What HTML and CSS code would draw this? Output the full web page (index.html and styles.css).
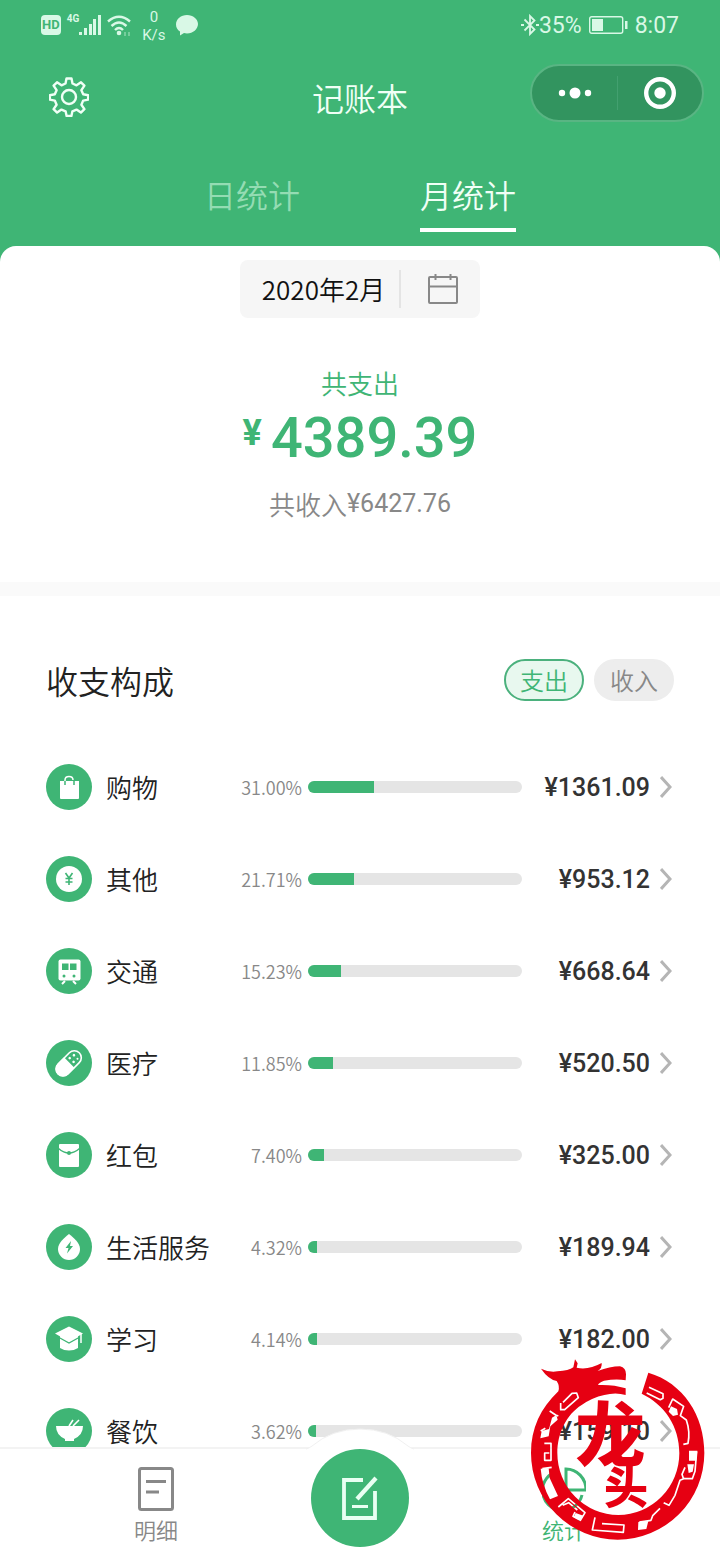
FILE: index.html
```html
<!DOCTYPE html>
<html lang="zh-CN">
<head>
<meta charset="utf-8">
<meta name="viewport" content="width=device-width, initial-scale=1">
<title>记账本</title>
<link rel="stylesheet" href="styles.css">
</head>
<body>
<div class="app">
  <header class="header">
    <div class="status">
      <div class="status-left">
        <span class="hd">HD</span>
        <span class="net">4G</span>
        <svg class="signal" width="22" height="20" viewBox="0 0 22 20" fill="currentColor"><path d="M0 17h3v3H0zM5 13h3v7H5zM10 9h3v11h-3zM14 4h3v16h-3zM19 0h3v20h-3z"/></svg>
        <svg width="25" height="21" viewBox="0 0 25 21" fill="none" stroke="currentColor" stroke-width="2.4"><path d="M1 6.500Q12 -3 23 6.500M4.500 11Q12 4 19.500 11M8 15Q12 11 16 15"/><circle cx="12" cy="18" r="2.300" fill="currentColor" stroke="none"/><path d="M18 17v4M22 17v4" stroke-width="2" opacity=".35"/></svg>
        <span class="speed"><span>0</span><span>K/s</span></span>
        <svg class="chat" width="22" height="21" viewBox="0 0 22 21" fill="currentColor"><path d="M11 0c6 0 11 4 11 9s-5 9.500-11 9.500c-1.200 0-2 0-3-.4L4 20.500V16.500C1.500 15 0 12.500 0 9.500 0 4 5 0 11 0z"/></svg>
      </div>
      <div class="status-right">
        <svg width="18" height="22" viewBox="0 0 18 22" fill="none" stroke="currentColor" stroke-width="1.800"><path d="M3.500 5.500l10 10L9 20V2l4.500 4.500-10 10"/><path d="M0 11h3M15 11h3"/></svg>
        <span>35%</span>
        <svg class="battery" width="39" height="18" viewBox="0 0 39 18"><rect x=".7" y=".7" width="33" height="16.600" rx="2" fill="none" stroke="currentColor" stroke-width="1.400"/><path d="M3 3h11v12H3zM36 5h2.500v8H36z" fill="currentColor"/></svg>
        <time>8:07</time>
      </div>
    </div>
    <div class="nav">
      <button class="icon-button" aria-label="设置">
        <svg width="40" height="40" viewBox="0 0 40 40" fill="none" stroke="currentColor" stroke-width="2.400" stroke-linejoin="round"><path d="M17.500 1.500h5l1 5 4 1.800 4.500-3 3.400 3.400-3 4.500 1.800 4.100 5 .9v4.400l-5 1-1.800 4.100 3 4.400-3.500 3.500-4.400-3-4.100 1.700-1 4.700h-4.800l-1-4.700-4.100-1.700-4.400 3-3.500-3.500 3-4.400-1.800-4.100-5-1v-4.400l5-.9 1.800-4.100-3-4.500 3.400-3.400 4.500 3 4-1.800z"/><circle cx="20" cy="20" r="7"/></svg>
      </button>
      <h1 class="title">记账本</h1>
      <div class="capsule">
        <button aria-label="更多"><svg width="36" height="14" viewBox="0 0 36 14" fill="currentColor"><circle cx="5" cy="7" r="3.200"/><circle cx="18" cy="7" r="5.500"/><circle cx="31" cy="7" r="3.200"/></svg></button>
        <button aria-label="关闭"><svg width="32" height="32" viewBox="0 0 32 32"><circle cx="16" cy="16" r="13.800" fill="none" stroke="currentColor" stroke-width="4.400"/><circle cx="16" cy="16" r="5.700" fill="currentColor"/></svg></button>
      </div>
    </div>
    <nav class="tabs">
      <button class="tab">日统计</button>
      <button class="tab tab-active">月统计</button>
    </nav>
  </header>

  <main class="content">
    <section class="summary">
      <button class="period">
        <span class="period-text">2020年2月</span>
        <svg width="32" height="32" viewBox="0 0 32 32" fill="none" stroke="currentColor" stroke-width="2"><rect x="2" y="4" width="28" height="26" rx="1"/><path d="M2 13.500h28M8.500 1v6M23.500 1v6"/></svg>
      </button>
      <p class="spend-label">共支出</p>
      <p class="spend"><span class="currency">¥</span>4389.39</p>
      <p class="income">共收入<span class="income-value">¥6427.76</span></p>
    </section>

    <section class="breakdown">
      <div class="breakdown-head">
        <h2>收支构成</h2>
        <div class="pills">
          <button class="pill pill-active">支出</button>
          <button class="pill">收入</button>
        </div>
      </div>
      <ul class="rows">
        <li class="row">
          <svg class="badge" viewBox="0 0 46 46"><circle class="disc" cx="23" cy="23" r="23"/><path d="M14 17h19v17q0 1-1 1H15q-1 0-1-1z" fill="#fff"/><path d="M19 22v-6q0-3.500 4-3.500t4 3.500" fill="none" stroke="#fff" stroke-width="1.500"/><path d="M19 17v4M28 17v4" stroke="#3fb575" stroke-width="1.500"/></svg>
          <span class="name">购物</span><span class="percent">31.00%</span>
          <span class="bar"><span class="fill" style="width:31%"></span></span>
          <span class="amount">¥1361.09</span><svg class="chevron" viewBox="0 0 12 22"><path d="M1 1l9 10-9 10"/></svg>
        </li>
        <li class="row">
          <svg class="badge" viewBox="0 0 46 46"><circle class="disc" cx="23" cy="23" r="23"/><circle cx="23" cy="23" r="13" fill="#fff"/><path d="M19.500 17l3.500 5 3.500-5M23 22v7M19.500 22.500h7M19.500 26h7" fill="none" stroke="#3fb575" stroke-width="1.600"/></svg>
          <span class="name">其他</span><span class="percent">21.71%</span>
          <span class="bar"><span class="fill" style="width:21.71%"></span></span>
          <span class="amount">¥953.12</span><svg class="chevron" viewBox="0 0 12 22"><path d="M1 1l9 10-9 10"/></svg>
        </li>
        <li class="row">
          <svg class="badge" viewBox="0 0 46 46"><circle class="disc" cx="23" cy="23" r="23"/><rect x="12.500" y="11.500" width="22" height="21" rx="2" fill="#fff"/><path d="M16 15.500h6.500v6.500H16zM24 15.500h6.500v6.500H24z" fill="#3fb575"/><circle cx="18" cy="28" r="1.500" fill="#3fb575"/><circle cx="28" cy="28" r="1.500" fill="#3fb575"/><path d="M19 33l-3 3M27 33l3 3" stroke="#fff" stroke-width="2"/></svg>
          <span class="name">交通</span><span class="percent">15.23%</span>
          <span class="bar"><span class="fill" style="width:15.23%"></span></span>
          <span class="amount">¥668.64</span><svg class="chevron" viewBox="0 0 12 22"><path d="M1 1l9 10-9 10"/></svg>
        </li>
        <li class="row">
          <svg class="badge" viewBox="0 0 46 46"><circle class="disc" cx="23" cy="23" r="23"/><g transform="rotate(45 23 23)"><rect x="16" y="8.500" width="14" height="30" rx="7" fill="none" stroke="#fff" stroke-width="1.600"/><path d="M15.500 22.500h15v9a7.500 7.500 0 0 1-15 0z" fill="#fff"/><g fill="#fff"><circle cx="20" cy="19" r="1.300"/><circle cx="25.500" cy="19" r="1.300"/><circle cx="21" cy="14" r="1.300"/><circle cx="26" cy="14" r="1"/></g></g></svg>
          <span class="name">医疗</span><span class="percent">11.85%</span>
          <span class="bar"><span class="fill" style="width:11.85%"></span></span>
          <span class="amount">¥520.50</span><svg class="chevron" viewBox="0 0 12 22"><path d="M1 1l9 10-9 10"/></svg>
        </li>
        <li class="row">
          <svg class="badge" viewBox="0 0 46 46"><circle class="disc" cx="23" cy="23" r="23"/><rect x="13" y="12" width="20" height="23" rx="1" fill="#fff"/><path d="M12.500 16.500Q23 25.500 33.500 16.500" fill="none" stroke="#3fb575" stroke-width="1.500"/><circle cx="23" cy="21" r="2" fill="#3fb575"/></svg>
          <span class="name">红包</span><span class="percent">7.40%</span>
          <span class="bar"><span class="fill" style="width:7.4%"></span></span>
          <span class="amount">¥325.00</span><svg class="chevron" viewBox="0 0 12 22"><path d="M1 1l9 10-9 10"/></svg>
        </li>
        <li class="row">
          <svg class="badge" viewBox="0 0 46 46"><circle class="disc" cx="23" cy="23" r="23"/><path d="M23 10c5 4 11 9 11 15a11 11 0 0 1-22 0c0-6 6-11 11-15z" fill="#fff"/><path d="M25 17l-5.500 7h3L21 29.500l6-7.500h-3z" fill="#3fb575"/></svg>
          <span class="name">生活服务</span><span class="percent">4.32%</span>
          <span class="bar"><span class="fill" style="width:4.32%"></span></span>
          <span class="amount">¥189.94</span><svg class="chevron" viewBox="0 0 12 22"><path d="M1 1l9 10-9 10"/></svg>
        </li>
        <li class="row">
          <svg class="badge" viewBox="0 0 46 46"><circle class="disc" cx="23" cy="23" r="23"/><path d="M14 20h18v12q-4 2.500-9 2.500t-9-2.500z" fill="#fff"/><path d="M23 10.500l14 7-14 8-14-8z" fill="#fff"/><path d="M13 21.500l10 5.500 10-5.500" fill="none" stroke="#3fb575" stroke-width="1.300"/><path d="M35 18v9" stroke="#fff" stroke-width="1.500"/></svg>
          <span class="name">学习</span><span class="percent">4.14%</span>
          <span class="bar"><span class="fill" style="width:4.14%"></span></span>
          <span class="amount">¥182.00</span><svg class="chevron" viewBox="0 0 12 22"><path d="M1 1l9 10-9 10"/></svg>
        </li>
        <li class="row">
          <svg class="badge" viewBox="0 0 46 46"><circle class="disc" cx="23" cy="23" r="23"/><path d="M10 18h27q0 9-9 13v2H19v-2q-9-4-9-13z" fill="#fff"/><path d="M23 18l4-6M27 18l6-6" stroke="#fff" stroke-width="1.600"/></svg>
          <span class="name">餐饮</span><span class="percent">3.62%</span>
          <span class="bar"><span class="fill" style="width:3.62%"></span></span>
          <span class="amount">¥159.10</span><svg class="chevron" viewBox="0 0 12 22"><path d="M1 1l9 10-9 10"/></svg>
        </li>
      </ul>
    </section>
  </main>

  <footer class="tabbar">
    <button class="tabbar-item">
      <svg width="44" height="44" viewBox="0 0 44 44" fill="none" stroke="currentColor" stroke-width="3"><rect x="5.500" y="1.500" width="33" height="41" rx="2"/><path d="M12 14.500h20M12 25h13"/></svg>
      <span>明细</span>
    </button>
    <div class="compose-slot">
      <svg class="hump" width="108" height="24" viewBox="0 0 108 24"><path d="M0 24v-3q2 0 6-3Q26 1 54 1t48 17q4 3 6 3v3z" fill="#fff"/><path d="M0 21q2 0 6-3Q26 1 54 1t48 17q4 3 6 3" fill="none" stroke="#f0f0f0"/></svg>
      <button class="compose" aria-label="记一笔">
        <svg width="40" height="46" viewBox="0 0 40 46" fill="none" stroke="currentColor" stroke-width="3.800"><path d="M23 5H4v38h31V16"/><path d="M17 24L36 3" stroke-width="4.200"/><path d="M12 31.500h16" stroke-width="3"/></svg>
      </button>
    </div>
    <button class="tabbar-item tabbar-active">
      <svg width="44" height="44" viewBox="0 0 44 44" fill="none" stroke="currentColor" stroke-width="3"><path d="M16 4A20 20 0 1 0 40 28"/><path d="M24 2v21h20A20 21 0 0 0 24 2z"/></svg>
      <span>统计</span>
    </button>
  </footer>

  <svg class="stamp" viewBox="60 50 531 555" role="img" aria-label="龙头">
    <mask id="fretwork" maskUnits="userSpaceOnUse" x="60" y="50" width="531" height="555">
      <rect x="60" y="50" width="531" height="555" fill="#fff"/>
      <g fill="none" stroke="#000" stroke-width="5" stroke-linejoin="round">
        <path d="M152 188v20h12l41-36-5-14-14 1-27 27"/>
        <path d="M119 212l18 12 8 3M92 272l14-8"/>
        <path d="M103 309h20v51h-19v-22h14M97 385l28-4"/>
        <path d="M145 500l30-25 50 42-14 23-22-12 6-13M158 495l18-8 26 22"/>
        <path d="M255 531l-8 38 93 7 2-22-66-4"/>
        <path d="M388 545l35-5 5-14 22-22"/>
        <path d="M417 141l42 19v14l-8 4-41-20"/>
        <path d="M476 202l12-26 33 22-10 28 18 13q12 35 5 70l-14 3"/>
        <path d="M560 333l-5 60-8 22-27-1-4-12 9-21M525 414l-15 6-15 45-18 30-16-8"/>
      </g>
      <path d="M139 224l4 14-22 20-5 30-25 6 4-22 22-6 9-34zM92 385l24-1 3 29 25 54-24 10q-24-44-28-92zM197 518l23 8-10 14-19-9zM385 545l30-3-6 24-25 3zM537 331h25l-3 30h-22zM532 372h20l-4 22-12 4z" fill="#000"/>
      <path d="M483 198l18 8 3 17-15 4-13-13z" fill="#000"/>
    </mask>
    <g fill="#e60012">
      <path mask="url(#fretwork)" d="M415 97C520 128 583 225 583 338A260 260 0 0 1 63 338C63 264 92 203 145 153Q150 137 140 122Q115 117 93 85Q118 97 142 93Q177 91 190 81L195 57L203 69L200 82Q235 90 275 68Q277 84 263 92Q300 78 330 78Q348 82 348 102L347 120Q320 115 282 121Q267 126 264 134Q310 132 347 144V164Q317 155 283 164Q246 172 215 194C170 222 142 278 142 338A183 186 0 0 0 508 338C508 258 464 193 395 160Z"/>
      <text class="stamp-large" x="196" y="361">龙</text>
      <text class="stamp-small" x="282" y="492">头</text>
    </g>
  </svg>
</div>
</body>
</html>
```
FILE: styles.css
```css
* { box-sizing: border-box; }

body, h1, h2, p, ul { margin: 0; padding: 0; }

body {
  font-family: "Noto Sans CJK SC", sans-serif;
  font-weight: 350;
  color: #222;
  background: #3fb575;
}

h1, h2 { font-weight: 350; }

button {
  border: 0;
  padding: 0;
  background: none;
  color: inherit;
  font: inherit;
}

svg { display: block; flex: none; }

.app {
  position: relative;
  display: flex;
  flex-direction: column;
  height: 100vh;
  overflow: hidden;
}

.header { flex: none; color: #f0fff6; }

.status {
  display: flex;
  justify-content: space-between;
  height: 50px;
  padding: 0 41px;
  font-family: Roboto, sans-serif;
  font-size: 23px;
  font-weight: 400;
  color: #d9f8e6;
}

.status-left, .status-right { display: flex; align-items: center; }

.hd {
  padding: 0 1px;
  border-radius: 4px;
  background: #d9f8e6;
  color: #3fb575;
  font-size: 13px;
  font-weight: 700;
  line-height: 20px;
}

.net {
  align-self: flex-start;
  margin: 12px 0 0 6px;
  font-size: 10px;
  font-weight: 700;
  line-height: 14px;
}

.signal { margin-right: 6px; }

.speed {
  display: flex;
  flex-direction: column;
  align-items: center;
  margin: 2px 10px 0;
  font-size: 15px;
  line-height: 18px;
}

.battery { margin: 0 7px; }

.nav {
  display: grid;
  grid-template-columns: minmax(0, 1fr) auto minmax(0, 1fr);
  align-items: center;
  height: 94px;
  padding: 0 16px 0 49px;
}

.icon-button { justify-self: start; }

.title {
  margin-right: 33px;
  font-size: 32px;
  line-height: 48px;
}

.capsule {
  justify-self: end;
  display: grid;
  grid-template-columns: 1fr 1fr;
  align-items: center;
  width: 174px;
  height: 58px;
  margin-bottom: 8px;
  border: 2px solid #59b583;
  border-radius: 29px;
  background: #32945f;
  color: #fff;
}

.capsule button { display: grid; place-items: center; height: 34px; }
.capsule button + button { border-left: 1px solid #43a070; }

.tabs {
  display: flex;
  justify-content: center;
  gap: 120px;
  height: 102px;
  padding: 26px 0 14px;
}

.tab {
  border-bottom: 4px solid transparent;
  padding-bottom: 10px;
  color: #94dcb3;
  font-size: 32px;
  line-height: 48px;
}

.tab-active { border-color: #fff; color: #f0fff6; }

.content {
  flex: 1;
  min-height: 0;
  overflow-y: auto;
  scrollbar-width: none;
  border-radius: 16px 16px 0 0;
  background: #fff;
}

.summary {
  display: flex;
  flex-direction: column;
  align-items: center;
  padding: 14px 0 60px;
  border-bottom: 14px solid #fafafa;
}

.period {
  display: flex;
  align-items: center;
  height: 58px;
  padding: 0 21px 0 22px;
  border-radius: 8px;
  background: #f6f6f6;
  color: #888;
}

.period-text {
  margin-right: 26px;
  padding-right: 14px;
  border-right: 2px solid #e4e4e4;
  color: #111;
  font-size: 26px;
  line-height: 38px;
}

.spend-label {
  margin-top: 47px;
  color: #3fb575;
  font-size: 26px;
  line-height: 36px;
}

.spend {
  display: flex;
  gap: 9px;
  color: #3fb575;
  font-family: Roboto, sans-serif;
  font-size: 56px;
  font-weight: 500;
  line-height: 74px;
}

.currency { font-size: 36px; font-weight: 700; line-height: 64px; }

.income {
  display: flex;
  margin-top: 10px;
  color: #888;
  font-size: 26px;
  line-height: 37px;
}

.income-value { font-family: Roboto, sans-serif; font-size: 25px; font-weight: 400; }

.breakdown { padding: 63px 46px 0; }

.breakdown-head {
  display: flex;
  align-items: center;
  justify-content: space-between;
  margin-bottom: 40px;
}

.breakdown-head h2 { font-size: 32px; line-height: 42px; }

.pills { display: flex; gap: 10px; }

.pill {
  width: 80px;
  height: 42px;
  border: 2px solid #ededed;
  border-radius: 21px;
  background: #ededed;
  color: #888;
  font-size: 24px;
  line-height: 38px;
}

.pill-active { border-color: #4bb17d; background: #e8f8ef; color: #3fb575; }

.rows { list-style: none; }

.row { display: flex; align-items: center; height: 92px; }

.badge { width: 46px; height: 46px; margin-right: 14px; }

.disc { fill: #3fb575; }

.name { width: 120px; font-size: 26px; line-height: 38px; }

.percent {
  width: 76px;
  margin-right: 6px;
  color: #888;
  font-size: 18px;
  text-align: right;
}

.bar {
  flex: 1;
  height: 12px;
  overflow: hidden;
  border-radius: 6px;
  background: #e5e5e5;
}

.fill { display: block; height: 100%; background: #3fb575; }

.amount {
  width: 128px;
  margin-right: 10px;
  color: #333;
  font-family: Roboto, sans-serif;
  font-size: 25px;
  font-weight: 500;
  text-align: right;
}

.chevron {
  width: 12px;
  height: 22px;
  margin-right: 2px;
  fill: none;
  stroke: #b5b5b5;
  stroke-width: 3;
}

.tabbar {
  position: relative;
  flex: none;
  display: grid;
  grid-template-columns: repeat(3, 1fr);
  height: 113px;
  padding: 0 54px;
  border-top: 2px solid #f3f3f3;
  background: #fff;
}

.tabbar-item {
  display: flex;
  flex-direction: column;
  align-items: center;
  padding-top: 18px;
  color: #888;
  font-size: 22px;
  line-height: 36px;
}

.tabbar-active { color: #3fb575; }

.compose-slot { position: relative; display: flex; justify-content: center; }

.hump { position: absolute; bottom: 108px; }

.compose {
  position: relative;
  display: grid;
  place-items: center;
  width: 98px;
  height: 98px;
  border-radius: 50%;
  background: #3fb575;
  color: #e9fff2;
}

.stamp {
  position: absolute;
  right: 13px;
  bottom: 18px;
  width: 177px;
  height: 185px;
  pointer-events: none;
}

.stamp text { font-family: "Noto Sans CJK SC", sans-serif; font-weight: 900; }
.stamp-large { font-size: 210px; }
.stamp-small { font-size: 132px; }
```
